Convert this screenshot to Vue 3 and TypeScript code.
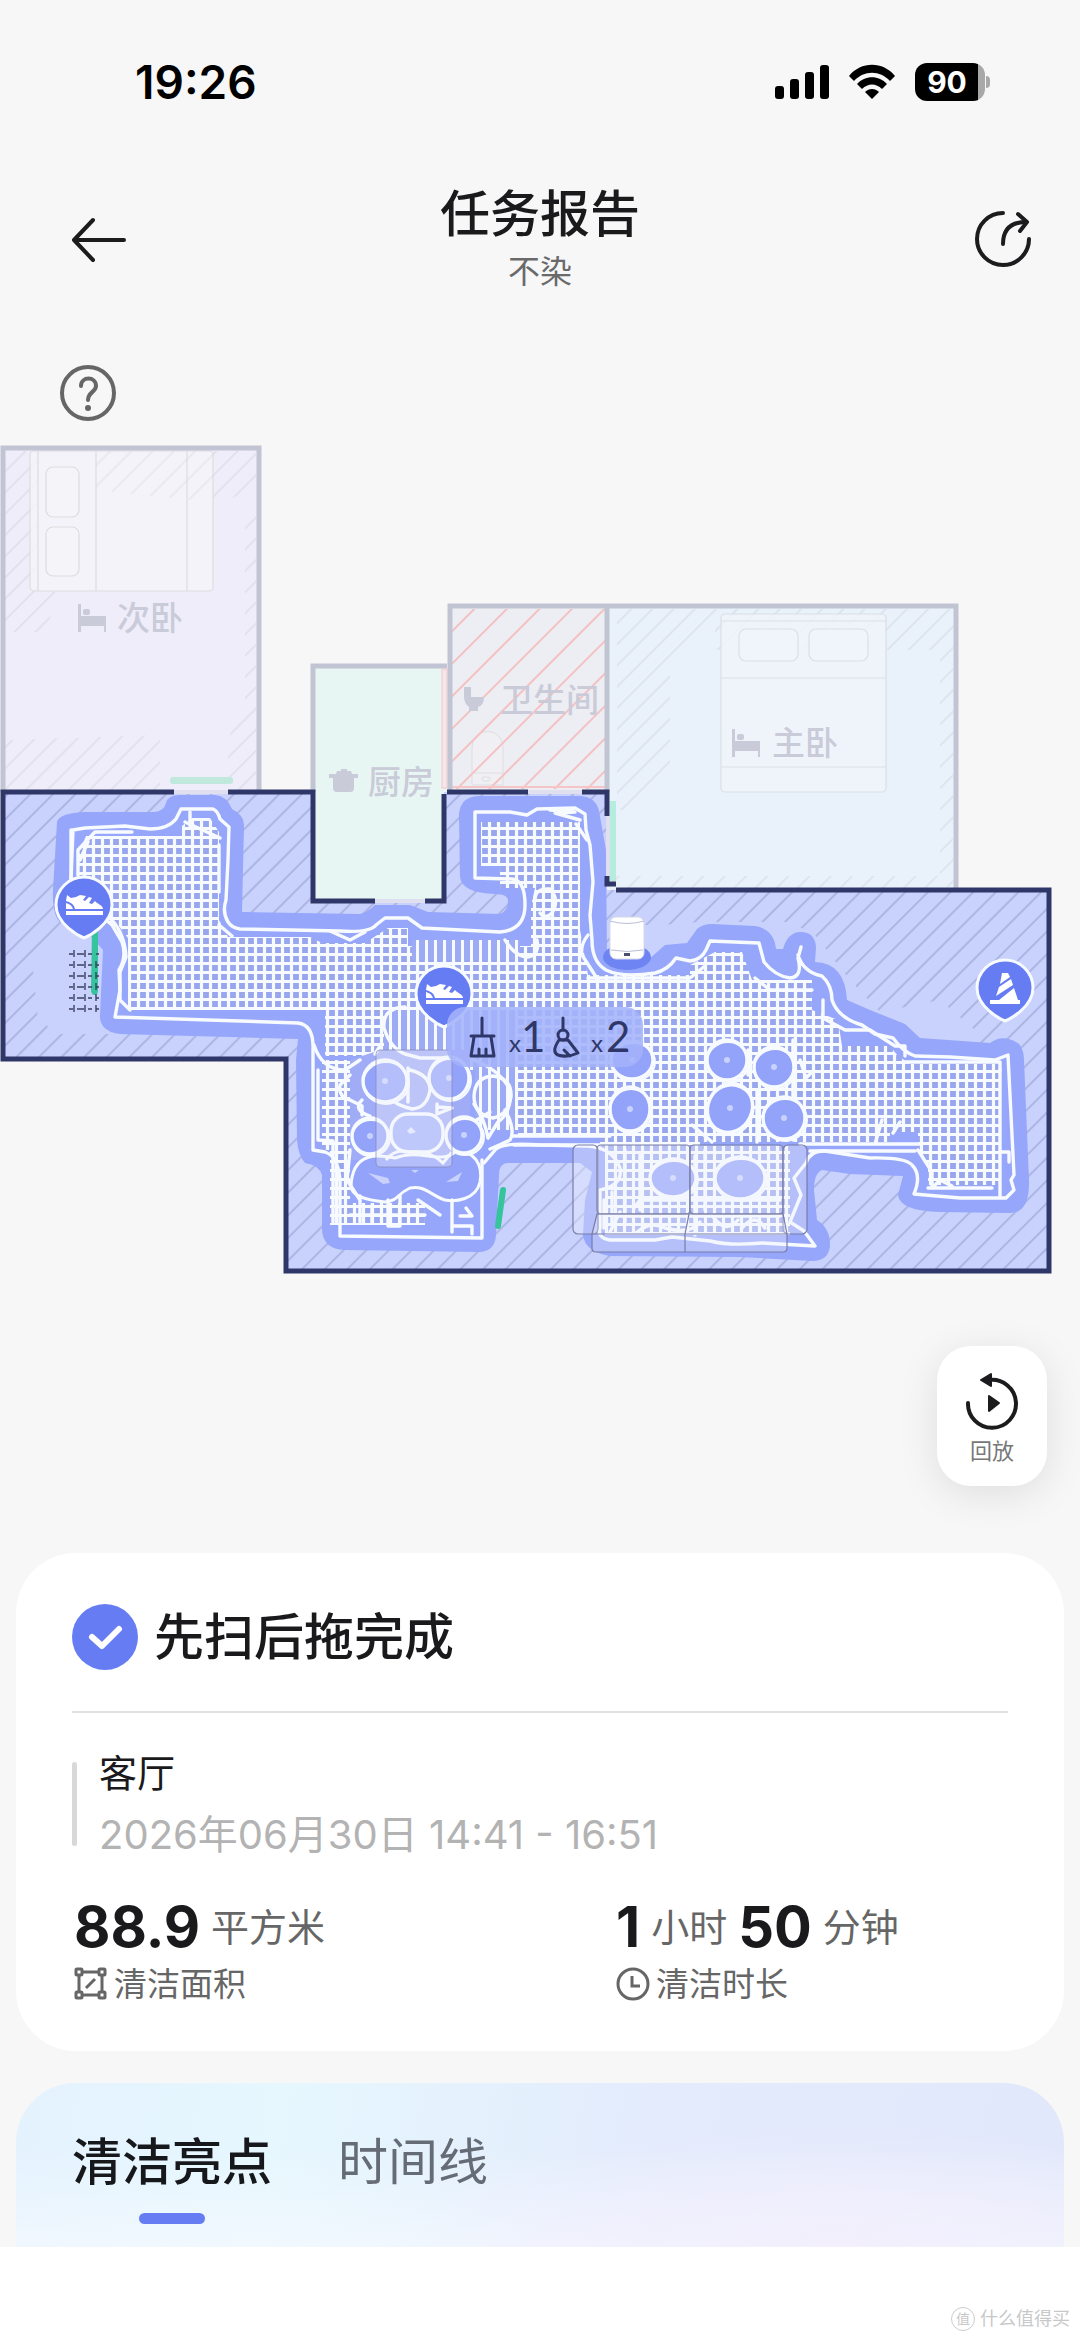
<script setup lang="ts">
import { ref } from 'vue'

interface Blob { x: number; y: number; rx: number; ry: number; tilt: number }
interface Tab { id: string; label: string }

const tabs: Tab[] = [
  { id: 'highlights', label: '清洁亮点' },
  { id: 'timeline', label: '时间线' },
]
const activeTab = ref<string>('highlights')

// Chair legs, stools and other round obstacles the robot circled
const blobs: Blob[] = [
  { x: 385, y: 1081, rx: 22, ry: 21, tilt: 0 },
  { x: 449, y: 1078, rx: 20, ry: 21, tilt: 0 },
  { x: 370, y: 1136, rx: 18, ry: 18, tilt: 0 },
  { x: 464, y: 1135, rx: 18, ry: 18, tilt: 0 },
  { x: 632, y: 1060, rx: 21, ry: 19, tilt: 0 },
  { x: 630, y: 1109, rx: 20, ry: 22, tilt: 0 },
  { x: 727, y: 1060, rx: 20, ry: 20, tilt: 0 },
  { x: 774, y: 1067, rx: 20, ry: 20, tilt: 0 },
  { x: 730, y: 1108, rx: 22, ry: 25, tilt: 25 },
  { x: 784, y: 1118, rx: 21, ry: 21, tilt: 0 },
  { x: 673, y: 1178, rx: 23, ry: 19, tilt: 0 },
  { x: 740, y: 1178, rx: 25, ry: 21, tilt: 0 },
]
const shoePins = [
  { x: 84, y: 905 },
  { x: 444, y: 994 },
]
</script>

<template>
  <main class="page">
    <div class="status">
      <span class="clock">19:26</span>
      <div class="status-icons">
        <svg width="54" height="36" viewBox="0 0 54 36" aria-hidden="true">
          <rect x="0" y="22" width="9" height="13" rx="3" />
          <rect x="15" y="15" width="9" height="20" rx="3" />
          <rect x="30" y="8" width="9" height="27" rx="3" />
          <rect x="45" y="1" width="9" height="34" rx="3" />
        </svg>
        <svg width="48" height="36" viewBox="0 0 48 36" aria-hidden="true">
          <path d="M1 12 C13 -3 35 -3 47 12 L42 17 C32 6 16 6 6 17 Z" />
          <path d="M9 20 C17 11 31 11 39 20 L34 25 C28 19 20 19 14 25 Z" />
          <path d="M17 28 C21 24 27 24 31 28 L24 35 Z" />
        </svg>
        <div class="battery"><span>90</span></div>
      </div>
    </div>

    <header class="header">
      <button class="icon-btn back" aria-label="返回">
        <svg width="56" height="48" viewBox="0 0 56 48" fill="none" stroke="#1c1c1e" stroke-width="4" stroke-linecap="round" stroke-linejoin="round">
          <path d="M23 5 L4 25 L23 45 M4 25 H54" />
        </svg>
      </button>
      <div class="titles">
        <h1>任务报告</h1>
        <p>不染</p>
      </div>
      <button class="icon-btn share" aria-label="分享">
        <svg width="58" height="58" viewBox="0 0 58 58" fill="none" stroke="#1c1c1e" stroke-width="4" stroke-linecap="round" stroke-linejoin="round">
          <path d="M29 3 A26 26 0 1 0 55 29" />
          <path d="M29 34 C29 20 36 12 52 12" />
          <path d="M44 4 L53 12 L46 21" />
        </svg>
      </button>
    </header>

    <button class="help" aria-label="帮助">
      <svg width="60" height="60" viewBox="0 0 60 60" fill="none" stroke="#666" stroke-width="4" stroke-linecap="round">
        <circle cx="30" cy="29" r="26" />
        <path d="M23 22 C23 12 38 12 38 22 C38 28 30 28 30 36" />
        <circle cx="30" cy="44" r="3" fill="#666" stroke="none" />
      </svg>
    </button>

    <svg class="map" viewBox="0 430 1080 860" role="img" aria-label="清洁地图">
      <defs>
        <pattern id="hatch" width="16" height="16" patternUnits="userSpaceOnUse" patternTransform="rotate(45)">
          <path d="M7 0 V16" stroke="#a9b2e0" stroke-width="1.8" />
        </pattern>
        <pattern id="hatchSoft" width="15" height="15" patternUnits="userSpaceOnUse" patternTransform="rotate(45)">
          <path d="M7 0 V15" stroke="#d3d6e2" stroke-width="1.4" />
        </pattern>
        <pattern id="hatchRed" width="23" height="23" patternUnits="userSpaceOnUse" patternTransform="rotate(45)">
          <path d="M7 0 V23" stroke="#f4c1c3" stroke-width="2" />
        </pattern>
        <pattern id="grid" x="80" y="833" width="9" height="9" patternUnits="userSpaceOnUse">
          <rect width="9" height="9" fill="#98a6ee" />
          <path d="M0 4.5 H9 M4.5 0 V9" stroke="#f7fbff" stroke-width="3.2" />
        </pattern>
        <pattern id="lanes" x="80" y="833" width="9" height="9" patternUnits="userSpaceOnUse">
          <path d="M4.5 0 V9" stroke="#f7fbff" stroke-width="3" />
        </pattern>
        <g id="bedIcon">
          <path d="M0 0 H3 V12 H28 V28 H26 V22 H3 V28 H0 Z" />
          <rect x="5" y="5" width="7" height="6" rx="2" />
        </g>
        <g id="pin">
          <path d="M0 33 C-5 31 -28 19 -28 0 A28 28 0 0 1 28 0 C28 19 5 31 0 33 Z" fill="#667cf3" stroke="#f7fbff" stroke-width="3" />
        </g>
        <g id="shoe" fill="#fff">
          <path d="M-17 -9 L-13 -6 L-8 -7 L-4 -9 L2 -8 L-1 -4 L1 -3 L5 -7 L8 -6 L5 -1 L8 0 L11 -3 C13 0 19 1 19 5 H-9 C-10 0 -14 -2 -18 -3 Z" />
          <path d="M-18 -1 C-14 0 -12 2 -11 5 H-18 Z" />
          <rect x="-18" y="7" width="37" height="4" />
        </g>
      </defs>

      <!-- second bedroom -->
      <rect x="3" y="448" width="256" height="344" fill="#efedfa" />
      <path d="M5 451 H38 V592 H60 L45 632 H5 Z M213 451 H256 V490 L225 500 H213 Z M5 740 L160 735 V790 H5 Z M245 510 H256 V790 H228 V740 L245 700 Z" fill="url(#hatchSoft)" opacity=".7" />
      <g fill="#f5f3f8" fill-opacity=".85" stroke="#dddde0" stroke-width="1.2">
        <rect x="30" y="451" width="183" height="140" rx="4" />
        <rect x="46" y="467" width="33" height="50" rx="7" />
        <rect x="46" y="527" width="33" height="49" rx="7" />
        <path d="M38 451 V591 M96 451 V591 M187 451 V591" />
      </g>
      <path d="M46 451 H213 V480 L190 500 L96 490 V451 Z" fill="url(#hatchSoft)" opacity=".5" />
      <path d="M3 792 V448 H259 V792" fill="none" stroke="#c1c4d3" stroke-width="5" />
      <rect x="170" y="777" width="63" height="7" rx="3" fill="#c0e8dd" />

      <!-- kitchen -->
      <path d="M313 666 H447 V902 H313 Z" fill="#e8f6f3" />
      <path d="M313 792 V666 H447" fill="none" stroke="#c1c4d3" stroke-width="5" />
      <rect x="442" y="669" width="5" height="119" fill="#f3e7ec" stroke="#f5c5c8" />

      <!-- bathroom -->
      <rect x="450" y="606" width="157" height="186" fill="#edeef3" />
      <g fill="#f0f0f4" fill-opacity=".7" stroke="#dedde1">
        <path d="M472 785 V748 C472 726 503 726 503 748 V785 Z M472 773 H503" />
        <rect x="482" y="777" width="8" height="4" rx="2" />
      </g>
      <rect x="452" y="609" width="153" height="180" fill="url(#hatchRed)" />
      <path d="M450 787 H605" stroke="#f5c5c8" stroke-width="2" />

      <!-- main bedroom -->
      <rect x="607" y="606" width="349" height="284" fill="#e9f2fb" />
      <path d="M610 609 H953 V887 H940 V650 H715 V625 L670 660 V780 L640 810 H617 V609 Z M610 876 H940 V888 H610 Z" fill="url(#hatchSoft)" opacity=".7" />
      <g fill="#f0f5fa" fill-opacity=".85" stroke="#d9dfe5" stroke-width="1.2">
        <rect x="721" y="614" width="165" height="178" rx="4" />
        <rect x="739" y="629" width="59" height="32" rx="7" />
        <rect x="809" y="629" width="59" height="32" rx="7" />
        <path d="M721 621 H886 M721 678 H886 M721 767 H886" />
      </g>
      <path d="M450 792 V606 H956 V890 M607 606 V792" fill="none" stroke="#c1c4d3" stroke-width="5" />
      <rect x="610" y="801" width="6" height="80" fill="#b6ecdd" />

      <!-- living room floor -->
      <path d="M3 792 H313 V901 H444 V792 H607 V890 H1049 V1271 H286 V1059 H3 Z" fill="#c8d2fd" />
      <path d="M3 792 H313 V901 H444 V792 H607 V890 H1049 V1271 H286 V1059 H3 Z" fill="url(#hatch)" />
      <path d="M32 960 L60 930 H110 V1034 H60 L38 1020 Z M615 925 H660 L700 922 H790 L815 935 L850 980 L880 1012 L940 1000 L975 1030 V1045 H860 L790 965 L640 965 Z" fill="#c8d2fd" />

      <!-- mopped area -->
      <path d="M57 822 Q59 813 85 812 H155 Q164 811 166 803 Q168 795 180 795 H215 Q227 796 232 809 Q244 815 244 825 L242 912 L360 914 Q368 912 375 905 H410 L428 912 L500 914 Q508 911 508 901 Q508 894 495 894 Q462 893 460 877 L459 815 Q460 796 480 796 H580 Q596 797 599 811 L606 850 L607 960 L648 960 L665 945 L687 943 L697 929 Q703 924 712 924 L755 926 Q774 929 776 949 H783 Q788 931 802 932 Q815 933 816 947 L815 962 Q845 963 847 1000 L870 1010 L905 1024 L920 1038 L990 1043 Q1003 1033 1019 1044 Q1024 1050 1024 1060 L1029 1180 Q1030 1213 1010 1213 L940 1212 Q900 1211 898 1195 L903 1176 L850 1174 L822 1170 Q814 1173 814 1190 L817 1220 Q830 1228 830 1245 Q829 1261 812 1261 L740 1257 L610 1256 Q585 1252 583 1235 L585 1200 L592 1172 L580 1163 H510 Q499 1162 499 1175 L496 1235 Q495 1251 480 1252 L345 1250 Q323 1249 322 1230 V1175 Q319 1165 305 1163 Q298 1155 297 1140 L296 1060 L298 1039 L120 1034 Q99 1031 100 1015 L103 950 L90 935 L60 922 Q52 915 53 890 Z" fill="#96a6fb" />

      <!-- sweep passes -->
      <path d="M86 836 H182 V826 L192 818 H210 L219 832 V920 L228 937 H310 L322 943 H365 L388 928 H408 V946 H531 V906 L535 888 H500 V866 H481 V822 H580 V930 L588 975 H690 V965 L715 952 H742 L752 980 H812 V1010 L838 1020 L842 1046 H890 L898 1056 L910 1064 H1000 V1185 H928 V1165 L918 1150 V1132 H890 V1142 H700 V1235 H605 V1146 H600 V1135 H518 V1064 H380 V1056 H325 V1010 H128 V938 L118 925 H88 V900 H78 V855 Z" fill="url(#grid)" />
      <path d="M322 1060 H380 V1160 H350 V1225 H330 V1150 H322 Z" fill="url(#grid)" />
      <path d="M348 1203 H425 V1225 H348 Z M700 1146 H790 V1235 H700 Z" fill="url(#grid)" />
      <path d="M384 1010 H518 V1130 H475 V1070 H384 Z M412 940 H520 V960 H412 Z" fill="#9dabf5" />
      <path d="M384 1010 H518 V1130 H475 V1070 H384 Z M412 940 H520 V960 H412 Z" fill="url(#lanes)" />
      <path d="M350 1060 L380 1050 H470 V1160 H350 Z" fill="#a0adf6" />

      <path d="M351 1187 C352 1150 380 1155 395 1158 C420 1148 440 1165 455 1152 C475 1150 483 1165 480 1182 C476 1200 455 1202 445 1200 C430 1195 425 1185 410 1188 C395 1195 400 1200 385 1202 C365 1200 352 1195 351 1187 Z" fill="#93a3fa" stroke="#f7fbff" stroke-width="3" />
      <path d="M368 1173 L388 1178 L390 1183 L383 1184 Z M446 1182 L462 1172 L458 1181 Z M411 1170 L419 1170 L415 1173 Z" fill="#c8d2fd" />

      <!-- edge passes -->
      <g fill="none" stroke="#f7fbff" stroke-width="3.4" stroke-linejoin="round" stroke-linecap="round">
        <path d="M71 880 L73 830 L85 828 L125 826 L150 829 Q168 829 176 819 L181 809 H213 Q218 811 220 819 L229 827 L228 860 L226 900 Q222 912 228 922 Q232 928 240 929 L340 931 Q370 933 376 925 L385 918 H408 L422 928 L500 932 Q525 930 525 905 Q525 880 512 879 L475 878 V812 L510 812 L527 815 L537 809 L575 808 L585 814 L586 830 L590 845 L593 882 L590 915 L592 940 Q592 962 606 970 Q622 978 655 973 Q668 970 676 958 L690 961 Q701 960 706 950 L710 941 L759 943 L764 962 Q775 976 790 978 Q803 977 798 958 L801 947 M798 955 Q803 972 822 976 Q832 985 832 1000 Q838 1018 862 1025 L875 1034 L893 1038 Q903 1052 915 1056 L950 1057 L995 1060 L1008 1055 L1011 1115 L1014 1175 L1011 1180 L1014 1190 L1006 1198 L960 1198 L914 1194 Q922 1175 912 1165 Q905 1157 870 1158 L825 1151 Q810 1150 806 1163 L794 1178 L801 1195 L790 1222 L804 1231 L815 1246 L762 1243 Q730 1246 710 1241 L672 1237 L655 1240 L610 1240 Q597 1238 600 1228 V1190 Q623 1185 620 1168 Q613 1148 588 1146 L540 1145 Q505 1142 496 1149 L484 1163" />
        <path d="M71 830 V880 M78 875 V850 L95 832 H132 M80 860 L88 842 M482 1160 V1238 L340 1236 V1180 Q338 1156 325 1152 L313 1150 V1050 Q314 1025 298 1023 L240 1021 L115 1017 L120 990 L119 970 Q127 957 122 942 L112 925 L104 918" />
        <path d="M112 920 Q125 935 126 957 L120 972 V1000 L130 1010 M314 1045 Q322 1070 345 1070 L360 1060 M318 1070 V1140 L333 1141 V1222 M350 1075 L340 1085 Q338 1097 350 1100 L362 1106 V1115" />
        <path d="M219 845 V892 M219 925 L232 936 M185 822 L220 838 M190 812 V826 M550 810 L575 812 L555 813 L580 820 M576 824 L587 840" />
        <path d="M330 931 L350 940 L365 932 M505 940 Q515 957 528 957 Q540 955 537 940 M535 900 Q535 888 550 889 Q560 900 552 913 Q545 920 540 913 M588 935 Q580 945 582 955 L598 980" />
        <path d="M588 978 H690 L705 966 M755 978 L770 990 H812 M823 1000 V1018 L845 1030 H870 L895 1046 H905 V1056 M905 1062 H1000 V1070 M513 1136 H610 M514 1145 H600" />
        <path d="M405 1007 Q382 1008 384 1028 Q390 1048 405 1054 L420 1058 H450 M380 1046 L375 1054 M474 1060 Q500 1070 510 1090 Q512 1112 498 1122 L488 1138 Q485 1120 474 1104" />
        <path d="M493 1076 Q512 1078 511 1097 Q508 1115 493 1118 Q474 1115 474 1096 Q475 1077 493 1076 Z M505 1110 Q516 1130 510 1140 Q500 1145 490 1149" />
        <path d="M410 1070 Q430 1075 430 1090 Q427 1108 412 1109 Q398 1105 395 1102 M408 1068 V1102 M370 1116 Q352 1110 362 1100 M437 1107 L452 1108 L437 1114 L437 1104 M470 1124 L490 1112" />
        <path d="M350 1150 L347 1180 L360 1200 M350 1215 H425 M360 1196 V1222 M372 1205 V1222 M388 1200 V1226 H400 V1196 M452 1200 V1232 M452 1226 H472 V1234 M418 1200 L440 1215 M466 1208 L472 1216 H460" />
        <path d="M604 1200 V1228 M612 1192 V1225 M625 1150 V1222 M640 1155 V1210 M620 1216 H780 M636 1233 Q650 1220 665 1228 Q690 1235 700 1222 M712 1215 Q725 1235 738 1220 M742 1228 Q755 1212 765 1228 M610 1232 L620 1212 M634 1208 L640 1200 H780 M705 1150 V1210 M695 1156 V1235" />
        <path d="M1000 1070 V1196 M928 1188 H992 M918 1150 L932 1172 V1188 L940 1180 L952 1186 M1000 1152 H1009 V1162 M800 1144 H920 M810 1151 H915 M882 1120 L875 1144 M900 1122 L893 1133 M800 1060 L806 1078 L812 1072 M793 1040 V1140 M757 1090 V1142 M692 1125 L712 1142 M748 1050 V1075" />
      </g>

      <!-- obstacles -->
      <g v-for="(b, i) in blobs" :key="i" :transform="`rotate(${b.tilt} ${b.x} ${b.y})`">
        <ellipse :cx="b.x" :cy="b.y" :rx="b.rx" :ry="b.ry" fill="#93a3fa" stroke="#f7fbff" stroke-width="3.4" />
        <ellipse :cx="b.x + 1" :cy="b.y + 2" :rx="b.rx + 1" :ry="b.ry" fill="none" stroke="#f7fbff" stroke-width="2" />
        <ellipse :cx="b.x" :cy="b.y" rx="3" ry="3" fill="#c8d2fd" />
      </g>
      <rect x="391" y="1114" width="52" height="38" rx="17" fill="#a5b2fa" stroke="#f7fbff" stroke-width="3.4" />
      <path d="M407 1131 L411 1127 L416 1132 L410 1134 Z" fill="#dfe6fe" />
      <path d="M386 1160 Q395 1148 410 1152 Q430 1150 443 1163 L452 1152" fill="none" stroke="#f7fbff" stroke-width="3" />

      <!-- table and sofa -->
      <rect x="376" y="1050" width="76" height="117" rx="4" fill="#f1f1fb" fill-opacity=".35" stroke="#8388b4" stroke-opacity=".7" />
      <g fill="#f1f1fb" fill-opacity=".35" stroke="#777ca8" stroke-width="1.2">
        <rect x="573" y="1145" width="25" height="89" rx="5" />
        <rect x="597" y="1145" width="93" height="69" rx="4" />
        <rect x="690" y="1145" width="93" height="69" rx="4" />
        <rect x="783" y="1145" width="24" height="89" rx="5" />
        <path d="M597 1214 L592 1234 V1248 Q592 1252 596 1252 H685 V1234 L689 1214 Z M689 1214 L685 1234 V1252 H783 Q787 1252 787 1248 V1234 L783 1214 Z" />
        <path d="M592 1234 H787" />
      </g>

      <!-- dark walls with door gaps -->
      <path d="M174 792 H3 V1059 H286 V1271 H1049 V890 H616 M228 792 H313 V901 H375 M425 901 H444 V794 M447 792 H528 M582 792 H607 V816 M607 876 V884 H616" fill="none" stroke="#2f3768" stroke-width="5" />
      <path d="M174 792 H228 M375 901 H425 M528 792 H582 M608 816 V876" fill="none" stroke="#e0dff0" stroke-width="4" />

      <!-- mat and thresholds -->
      <path d="M92 928 H98 V990 Q98 995 95 995 Q91 995 91 990 Z" fill="#35c49b" />
      <path d="M69 954 H99 M69 965 H99 M69 976 H99 M69 987 H99 M69 998 H99 M69 1009 H99" fill="none" stroke="#3b4061" stroke-width="1.4" stroke-dasharray="4 4 7 4" />
      <path d="M74 950 V1015 M85 950 V1015 M96 961 V1015" fill="none" stroke="#3b4061" stroke-width="1.4" stroke-dasharray="7 4" />
      <path d="M503 1190 L498 1226" stroke="#35c49b" stroke-width="6" stroke-linecap="round" />

      <!-- dock -->
      <ellipse cx="627" cy="957" rx="24" ry="13" fill="#6f84f3" />
      <rect x="610" y="917" width="34" height="42" rx="6" fill="#fff" stroke="#d5d8e8" />
      <path d="M610 921 Q627 926 644 921 M611 950 Q627 953 643 950" fill="none" stroke="#b9bdd6" />
      <rect x="624" y="953" width="6" height="3" fill="#4a4e70" />

      <!-- pins -->
      <g v-for="p in shoePins" :key="p.x" :transform="`translate(${p.x} ${p.y})`">
        <use href="#pin" />
        <use href="#shoe" y="-1" />
      </g>
      <g transform="translate(1005 988)">
        <use href="#pin" />
        <g fill="#fff">
          <rect x="-15" y="12" width="30" height="4" />
          <path d="M-3 -15 H3 L5 -11 L-5 -4 Z M6 -9 L8 -3 L-9 8 L-6 -1 Z M9 0 L13 12 H-6 Z" />
        </g>
      </g>

      <!-- pass counter -->
      <rect x="447" y="1007" width="196" height="60" rx="18" fill="#a4b2fa" fill-opacity=".87" />
      <g fill="none" stroke="#2f3768" stroke-width="3" stroke-linecap="round" stroke-linejoin="round">
        <path d="M482 1018 V1035 M471 1036 H494 M474 1037 L471 1056 H494 L491 1037 M479 1055 V1049 M486 1055 V1049" />
        <path d="M563 1018 V1030 M559 1040 Q551 1052 558 1055 Q567 1058 578 1053 L568 1040 Z M564 1050 L570 1056" />
        <circle cx="563" cy="1035" r="5" />
      </g>
      <g class="passes">
        <text x="509" y="1052" font-size="24">x</text><text x="521" y="1052" font-size="42">1</text>
        <text x="591" y="1052" font-size="24">x</text><text x="606" y="1052" font-size="42">2</text>
      </g>

      <!-- room names -->
      <g class="rooms">
        <use href="#bedIcon" x="78" y="604" /><text x="117" y="630">次卧</text>
        <path d="M329 774 H336 L337 771 H341 V769 H347 V771 H351 L352 774 H358 V778 H354 V788 Q354 792 350 792 H337 Q333 792 333 788 V778 H329 Z" />
        <text x="368" y="794">厨房</text>
        <path d="M464 687 H471 V697 H484 Q484 705 478 707 V711 H469 V707 Q464 703 464 697 Z" />
        <text x="500" y="712">卫生间</text>
        <use href="#bedIcon" x="732" y="729" /><text x="772" y="755">主卧</text>
      </g>
    </svg>

    <button class="replay">
      <svg width="54" height="58" viewBox="0 0 54 58" fill="none" aria-hidden="true">
        <path d="M3 31 A24 24 0 1 0 24 8" stroke="#1c1c1e" stroke-width="4" stroke-linecap="round" />
        <path d="M16 8 L26 2 V14 Z M24 24 L34 31 L24 39 Z" fill="#1c1c1e" stroke="#1c1c1e" stroke-width="2" stroke-linejoin="round" />
      </svg>
      <span>回放</span>
    </button>

    <section class="card">
      <div class="card-head">
        <svg width="66" height="66" viewBox="0 0 66 66" aria-hidden="true">
          <circle cx="33" cy="33" r="33" fill="#667cf3" />
          <path d="M20 33 L30 42 L47 25" fill="none" stroke="#fff" stroke-width="6" stroke-linecap="round" stroke-linejoin="round" />
        </svg>
        <h2>先扫后拖完成</h2>
      </div>
      <div class="room">
        <i class="bar"></i>
        <div class="room-text">
          <p class="room-name">客厅</p>
          <p class="room-date">2026年06月30日 14:41 - 16:51</p>
        </div>
      </div>
      <div class="stats">
        <div class="stat">
          <p class="value"><b>88.9</b><span>平方米</span></p>
          <p class="label">
            <svg width="34" height="34" viewBox="0 0 34 34" fill="none" stroke="#666" stroke-width="3" aria-hidden="true">
              <rect x="2" y="2" width="6" height="6" rx="1" /><rect x="25" y="2" width="6" height="6" rx="1" />
              <rect x="2" y="25" width="6" height="6" rx="1" /><rect x="25" y="25" width="6" height="6" rx="1" />
              <path d="M8 5 H25 M8 28 H25 M5 8 V25 M28 8 V25 M12 21 L21 12" />
            </svg>清洁面积
          </p>
        </div>
        <div class="stat">
          <p class="value"><b>1</b><span>小时</span><b>50</b><span>分钟</span></p>
          <p class="label">
            <svg width="34" height="34" viewBox="0 0 34 34" fill="none" stroke="#666" stroke-width="3" aria-hidden="true">
              <circle cx="17" cy="17" r="15" /><path d="M16 9 V19 H24" />
            </svg>清洁时长
          </p>
        </div>
      </div>
    </section>

    <nav class="tabs" role="tablist">
      <button
        v-for="t in tabs" :key="t.id" role="tab" class="tab"
        :class="{ active: t.id === activeTab }" :aria-selected="t.id === activeTab"
        @click="activeTab = t.id"
      >{{ t.label }}</button>
    </nav>

    <footer class="footer"><span class="seal">值</span><span>什么值得买</span></footer>
  </main>
</template>

<style>
body { background: #fff; }
</style>

<style scoped>
.page {
  display: flex;
  flex-direction: column;
  min-height: 100vh;
  background: #f7f7f7;
  color: #1a1a1c;
  font-family: Inter, "Noto Sans CJK SC", sans-serif;
}
h1, h2, p { margin: 0; }
button { border: 0; padding: 0; background: none; font: inherit; color: inherit; }
svg { display: block; flex: none; }

.status {
  display: flex;
  justify-content: space-between;
  align-items: center;
  height: 64px;
  padding: 50px 95px 0 135px;
  color: #000;
}
.clock { font-size: 46px; font-weight: 600; line-height: 62px; }
.status-icons { display: flex; align-items: center; gap: 19px; }
.battery {
  position: relative;
  width: 70px;
  height: 38px;
  border-radius: 12px;
  background: linear-gradient(90deg, #000 90%, #a8a8a8 90%);
  color: #fff;
  font-size: 30px;
  font-weight: 700;
  line-height: 38px;
  text-align: center;
}
.battery span { margin-right: 6px; }
.battery::after {
  content: "";
  position: absolute;
  right: -5px;
  top: 13px;
  width: 4px;
  height: 12px;
  border-radius: 0 4px 4px 0;
  background: #a8a8a8;
}

.header {
  display: grid;
  grid-template-columns: 1fr auto 1fr;
  align-items: center;
  height: 250px;
  padding: 0 48px;
}
.icon-btn { display: flex; width: 58px; }
.back { margin-left: 22px; }
.share { justify-self: end; }
.titles { text-align: center; }
.titles h1 { font-size: 50px; font-weight: 500; line-height: 60px; }
.titles p { margin-top: 6px; font-size: 32px; line-height: 44px; color: #6a6a6a; }

.help { width: 60px; margin-left: 58px; }
.map { width: 100%; height: auto; margin-top: 6px; }
.rooms { fill: #c9cbd9; font-size: 33px; font-weight: 500; }
.passes { fill: #2f3768; font-family: Lato, sans-serif; }

.replay {
  display: flex;
  flex-direction: column;
  align-items: center;
  gap: 6px;
  align-self: flex-end;
  width: 110px;
  height: 140px;
  margin: 56px 33px 0 0;
  padding-top: 26px;
  border-radius: 34px;
  background: #fff;
  box-shadow: 0 8px 40px rgba(0, 0, 0, .1);
  color: #777;
  font-size: 22px;
  line-height: 30px;
}

.card {
  margin: 67px 16px 0;
  padding: 51px 56px 45px;
  border-radius: 60px;
  background: #fff;
}
.card-head {
  display: flex;
  align-items: center;
  gap: 16px;
  padding-bottom: 41px;
  border-bottom: 2px solid #e2e2e2;
}
.card-head h2 { font-size: 50px; font-weight: 500; line-height: 60px; }
.room { display: flex; align-items: center; gap: 22px; padding-top: 36px; }
.bar { width: 5px; height: 84px; border-radius: 3px; background: #d8d8d8; }
.room-text { display: flex; flex-direction: column; gap: 14px; line-height: 48px; }
.room-name { font-size: 38px; }
.room-date { font-size: 40px; color: #b3b3b3; }
.stats { display: grid; grid-template-columns: 1fr 394px; margin-top: 38px; }
.stat { padding-left: 2px; }
.value { display: flex; align-items: center; gap: 11px; line-height: 60px; }
.value b { font-size: 56px; font-weight: 700; }
.value span { font-size: 38px; color: #666; }
.label {
  display: flex;
  align-items: center;
  gap: 6px;
  margin-top: 5px;
  font-size: 33px;
  line-height: 44px;
  color: #666;
}

.tabs {
  display: flex;
  gap: 66px;
  margin: 32px 16px 0;
  padding: 49px 56px 23px;
  border-radius: 60px 60px 0 0;
  background:
    radial-gradient(ellipse 420px 120px at 78% 100%, #f3effd 0%, rgba(243, 239, 253, 0) 100%),
    linear-gradient(180deg, rgba(255, 255, 255, 0) 40%, rgba(248, 250, 255, .6) 100%),
    linear-gradient(100deg, #e4f2fe 0%, #e6f7fe 25%, #e3ebfc 60%, #e2e8fb 100%);
}
.tab {
  display: flex;
  flex-direction: column;
  align-items: center;
  gap: 21px;
  font-size: 50px;
  line-height: 60px;
  color: #666c75;
}
.tab::after { content: ""; width: 66px; height: 11px; border-radius: 6px; }
.tab.active { font-weight: 500; color: #16181c; }
.tab.active::after { background: #667cf3; }

.footer {
  display: flex;
  flex: 1;
  justify-content: flex-end;
  align-items: center;
  gap: 5px;
  min-height: 44px;
  padding: 50px 10px 0 0;
  background: #fff;
  color: #c8c8c8;
  font-size: 18px;
  line-height: 24px;
}
.seal { width: 22px; height: 22px; border: 1px solid #ccc; border-radius: 50%; font-size: 14px; line-height: 22px; text-align: center; }
</style>
